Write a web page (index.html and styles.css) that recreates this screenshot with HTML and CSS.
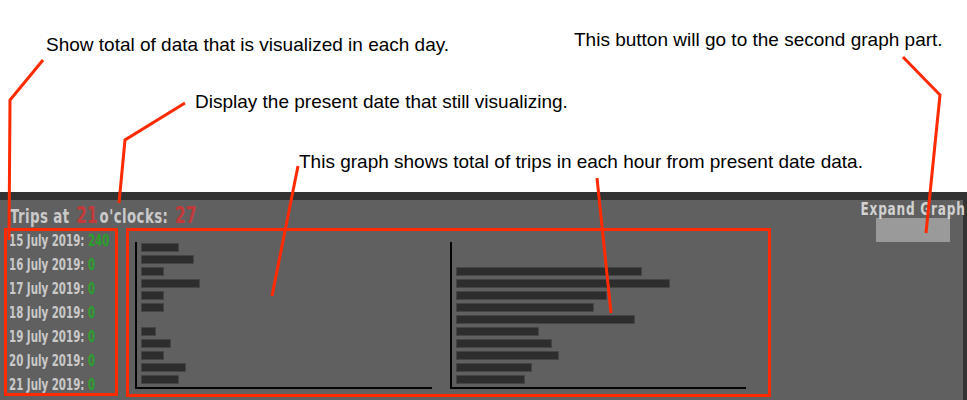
FILE: index.html
```html
<!DOCTYPE html>
<html>
<head>
<meta charset="utf-8">
<title>Trips visualization</title>
<link rel="stylesheet" href="styles.css">
</head>
<body>
<div class="page">
  <div class="notes">
    <p class="note note-days">Show total of data that is visualized in each day.</p>
    <p class="note note-button">This button will go to the second graph part.</p>
    <p class="note note-date">Display the present date that still visualizing.</p>
    <p class="note note-graph">This graph shows total of trips in each hour from present date data.</p>
  </div>
  <div class="app">
    <div class="panel">
      <div class="title"><span>Trips at</span> <span class="hl big">21</span><span>o'clocks:</span> <span class="hl big">27</span></div>
      <div class="expand">
        <span class="expand-label">Expand Graph</span>
        <button class="expand-btn" type="button"></button>
      </div>
      <div class="content">
        <ul class="days">
          <li>15 July 2019: <span class="count">240</span></li>
          <li>16 July 2019: <span class="count">0</span></li>
          <li>17 July 2019: <span class="count">0</span></li>
          <li>18 July 2019: <span class="count">0</span></li>
          <li>19 July 2019: <span class="count">0</span></li>
          <li>20 July 2019: <span class="count">0</span></li>
          <li>21 July 2019: <span class="count">0</span></li>
        </ul>
        <div class="charts">
          <div class="chart">
            <div class="bar" style="width:38px"></div>
            <div class="bar" style="width:53px"></div>
            <div class="bar" style="width:23px"></div>
            <div class="bar" style="width:59px"></div>
            <div class="bar" style="width:23px"></div>
            <div class="bar" style="width:23px"></div>
            <div class="bar" style="width:0px"></div>
            <div class="bar" style="width:15px"></div>
            <div class="bar" style="width:30px"></div>
            <div class="bar" style="width:23px"></div>
            <div class="bar" style="width:45px"></div>
            <div class="bar" style="width:38px"></div>
          </div>
          <div class="chart chart-wide">
            <div class="bar" style="width:0px"></div>
            <div class="bar" style="width:0px"></div>
            <div class="bar" style="width:186px"></div>
            <div class="bar" style="width:214px"></div>
            <div class="bar" style="width:151px"></div>
            <div class="bar" style="width:138px"></div>
            <div class="bar" style="width:179px"></div>
            <div class="bar" style="width:83px"></div>
            <div class="bar" style="width:96px"></div>
            <div class="bar" style="width:103px"></div>
            <div class="bar" style="width:76px"></div>
            <div class="bar" style="width:69px"></div>
          </div>
        </div>
      </div>
    </div>
  </div>
  <svg class="marks" width="967" height="400" viewBox="0 0 967 400">
    <g fill="none" stroke="#ff2a00" stroke-width="3" stroke-linejoin="miter">
      <rect x="5.5" y="229.5" width="111" height="165"/>
      <rect x="127.5" y="229.5" width="642" height="166"/>
      <polyline points="43,60 10,100 9,240"/>
      <polyline points="185,103 125,140 119,203"/>
      <polyline points="298,166 272,296"/>
      <polyline points="597,178 611,313"/>
      <polyline points="903,57 940,95 926,233"/>
    </g>
  </svg>
</div>
</body>
</html>
```

FILE: styles.css
```css
* { box-sizing: border-box; }

html, body {
  margin: 0;
  padding: 0;
  background: #ffffff;
}

.page {
  position: relative;
  width: 967px;
  height: 400px;
  overflow: hidden;
}

.notes {
  position: relative;
  height: 192px;
}

.note {
  position: absolute;
  margin: 0;
  font-family: "Liberation Sans", Arial, sans-serif;
  font-size: 19px;
  line-height: 22px;
  color: #000;
  white-space: nowrap;
}

.note-days { left: 46px; top: 34px; }
.note-button { left: 574px; top: 29px; }
.note-date { left: 195px; top: 91px; }
.note-graph { left: 299px; top: 151px; }

.app {
  background: #333333;
  padding: 8px 4px 0 0;
  height: 208px;
}

.panel {
  background: #606060;
  height: 200px;
  display: grid;
  grid-template-columns: 1fr 87px;
  grid-template-rows: 29px 1fr;
  font-family: "DejaVu Sans Condensed", "DejaVu Sans", sans-serif;
  font-weight: bold;
  color: #cacaca;
}

.title {
  grid-column: 1;
  grid-row: 1;
  padding: 5px 0 0 10px;
  font-size: 20px;
  line-height: 20px;
  letter-spacing: 0.6px;
  white-space: nowrap;
  transform: scaleX(0.74);
  transform-origin: 10px 50%;
}

.hl { color: #c33a3a; margin: 0 2px; }
.big { font-size: 23px; letter-spacing: 0.4px; }
.title .big:first-of-type { margin-left: 6px; }

.expand {
  grid-column: 2;
  grid-row: 1 / 3;
  display: flex;
  flex-direction: column;
  align-items: center;
  padding: 1px 13px 0 0;
}

.expand-label {
  font-size: 18px;
  line-height: 16px;
  letter-spacing: 1px;
  white-space: nowrap;
  color: #d2d2d2;
  transform: scaleX(0.75);
  margin-bottom: 1px;
}

.expand-btn {
  width: 74px;
  height: 24px;
  border: 0;
  padding: 0;
  background: #9a9a9a;
}

.content {
  grid-column: 1;
  grid-row: 2;
  display: flex;
}

.days {
  width: 127px;
  margin: 0;
  padding: 0 0 0 9px;
  list-style: none;
}

.days li {
  font-size: 15px;
  line-height: 24px;
  white-space: nowrap;
  transform: scaleX(0.76);
  transform-origin: left center;
}

.count { color: #2aa02a; }

.charts {
  display: flex;
  gap: 18px;
  padding: 13px 0 0 8px;
}

.chart {
  width: 297px;
  height: 147px;
  border-left: 2px solid #050505;
  border-bottom: 2px solid #050505;
  padding: 1px 0 0 4px;
}

.chart-wide { width: 296px; }

.bar {
  height: 9px;
  margin-bottom: 3px;
  background: #2c2d2c;
  box-shadow: inset 0 0 0 1px #444544;
}

.marks {
  position: absolute;
  left: 0;
  top: 0;
  pointer-events: none;
}
```
